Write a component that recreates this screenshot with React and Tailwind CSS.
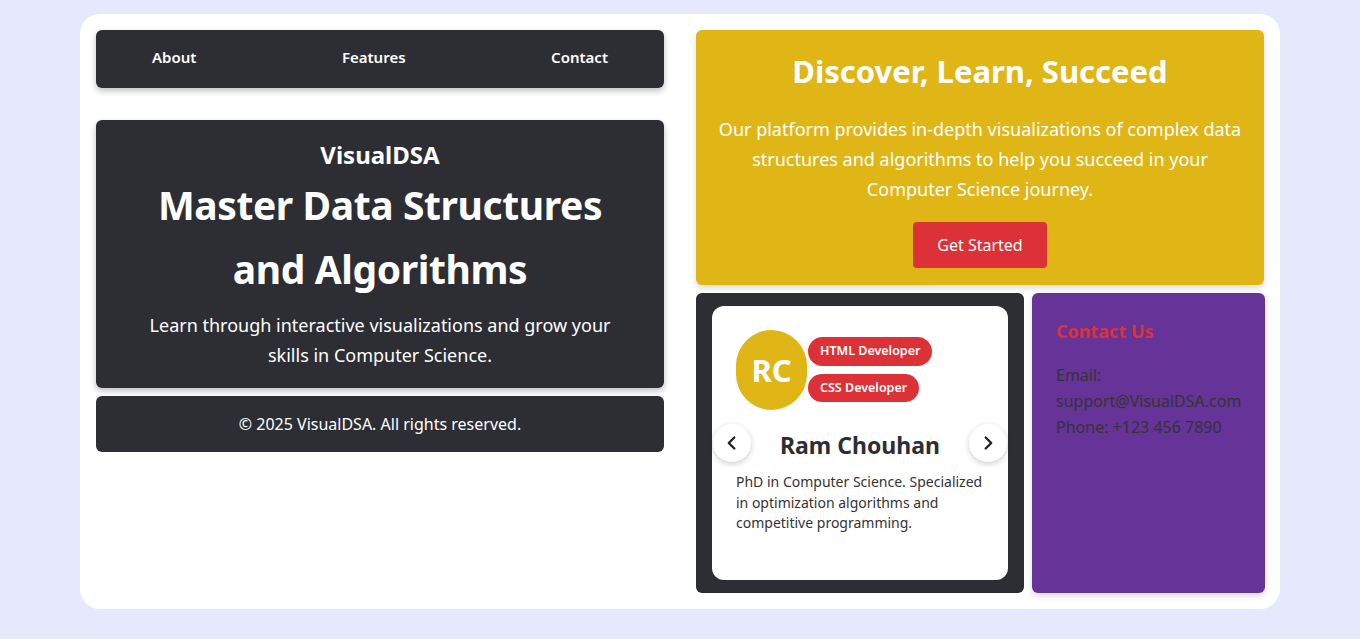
import React from "react";

function Chevron({ dir }) {
  return (
    <svg width="22" height="22" viewBox="0 0 24 24" fill="none" stroke="#222" strokeWidth="2.6" strokeLinecap="round" strokeLinejoin="round">
      {dir === "left" ? <path d="M14.5 18l-6-6 6-6" /> : <path d="M9.5 18l6-6-6-6" />}
    </svg>
  );
}

export default function App() {
  return (
    <div className="min-h-[639px] bg-[#e6e8fc] pt-[14px] pb-[30px]" style={{ fontFamily: "'Noto Sans', Lato, sans-serif" }}>
      <div className="mx-auto w-[1200px] rounded-[20px] bg-white p-4 grid grid-cols-2 gap-8">
        {/* Left column */}
        <div className="flex flex-col">
          <nav className="h-[58px] rounded-md bg-[#2d2e33] shadow-[0_3px_6px_rgba(0,0,0,0.25)] flex items-center justify-between px-14 pb-[3px] text-white font-semibold text-[15px]">
            <span>About</span>
            <span>Features</span>
            <span>Contact</span>
          </nav>
          <div className="mt-8 h-[268px] rounded-md bg-[#2d2e33] shadow-[0_3px_6px_rgba(0,0,0,0.25)] text-white text-center pt-[18px] px-8">
            <div className="text-[24px] font-bold leading-[34px]">VisualDSA</div>
            <h1 className="text-[39px] font-bold leading-[64px] mt-[1px] tracking-[-0.4px]">Master Data Structures<br />and Algorithms</h1>
            <p className="text-[18px] leading-[30px] mt-[9px] px-[14px]">Learn through interactive visualizations and grow your skills in Computer Science.</p>
          </div>
          <footer className="mt-2 h-[56px] rounded-md bg-[#2d2e33] text-white flex items-center justify-center text-[16px] pb-[1px]">
            © 2025 VisualDSA. All rights reserved.
          </footer>
        </div>

        {/* Right column */}
        <div className="flex flex-col gap-2">
          <div className="h-[255px] rounded-md bg-[#e0b616] shadow-[0_3px_6px_rgba(0,0,0,0.15)] text-white text-center pt-[18px] px-4">
            <h2 className="text-[31px] font-bold leading-[46px]">Discover, Learn, Succeed</h2>
            <p className="text-[18px] leading-[30px] mt-[20px]">Our platform provides in-depth visualizations of complex data structures and algorithms to help you succeed in your Computer Science journey.</p>
            <button className="mt-[18px] h-[46px] w-[134px] rounded bg-[#dc3237] text-white text-[16px]">Get Started</button>
          </div>
          <div className="flex gap-2 h-[300px]">
            <div className="w-[328px] shrink-0 rounded-md bg-[#2d2e33] px-4 py-[13px]">
              <div className="relative h-full rounded-xl bg-white px-6 pt-6">
                <div className="flex items-start gap-[1px]">
                  <div className="w-[71px] h-[80px] rounded-full bg-[#e0b616] flex items-center justify-center text-white text-[31px] font-bold">RC</div>
                  <div className="flex flex-col items-start gap-2 pt-[7px]">
                    <span className="rounded-full bg-[#dc3237] text-white text-[12.5px] font-semibold px-3 h-[29px] flex items-center">HTML Developer</span>
                    <span className="rounded-full bg-[#dc3237] text-white text-[12.5px] font-semibold px-3 h-[28px] flex items-center">CSS Developer</span>
                  </div>
                </div>
                <div className="text-center text-[23px] font-bold text-[#2d2e33] mt-[18px] leading-[34px]">Ram Chouhan</div>
                <p className="text-[14px] leading-[20.5px] text-[#333] mt-[10px]">PhD in Computer Science. Specialized in optimization algorithms and competitive programming.</p>
                <button className="absolute left-[1px] top-[118px] w-[38px] h-[38px] rounded-full bg-white shadow-[0_2px_6px_rgba(0,0,0,0.2)] flex items-center justify-center">
                  <Chevron dir="left" />
                </button>
                <button className="absolute right-[1px] top-[118px] w-[38px] h-[38px] rounded-full bg-white shadow-[0_2px_6px_rgba(0,0,0,0.2)] flex items-center justify-center">
                  <Chevron dir="right" />
                </button>
              </div>
            </div>
            <div className="flex-1 rounded-md bg-[#663399] shadow-[0_3px_6px_rgba(0,0,0,0.15)] px-6 pt-[26px]">
              <h3 className="text-[18px] font-bold text-[#dc3237] leading-[24px]">Contact Us</h3>
              <p className="text-[16px] leading-[26px] text-[#333] mt-[19px]">Email: support@VisualDSA.com<br />Phone: +123 456 7890</p>
            </div>
          </div>
        </div>
      </div>
    </div>
  );
}
